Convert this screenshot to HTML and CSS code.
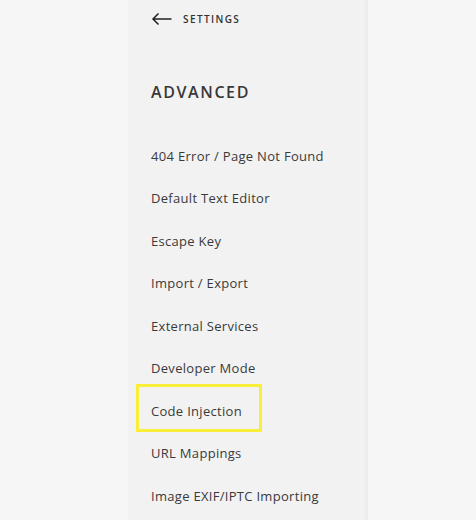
FILE: index.html
```html
<!DOCTYPE html>
<html>
<head>
<meta charset="utf-8">
<link rel="stylesheet" href="styles.css">
</head>
<body>
<div class="panel">
  <div class="header">
    <svg class="back" width="21" height="14" viewBox="0 0 21 14"><path d="M20.5 7H2M7.5 1.5L2 7l5.5 5.5" fill="none" stroke="#222" stroke-width="1.5"/></svg>
    <span class="crumb">SETTINGS</span>
  </div>
  <h1 class="title">ADVANCED</h1>
  <ul class="menu">
    <li>404 Error / Page Not Found</li>
    <li>Default Text Editor</li>
    <li>Escape Key</li>
    <li>Import / Export</li>
    <li>External Services</li>
    <li>Developer Mode</li>
    <li class="hl">Code Injection</li>
    <li>URL Mappings</li>
    <li>Image EXIF/IPTC Importing</li>
  </ul>
</div>
</body>
</html>
```
FILE: styles.css
```css
html, body { margin: 0; padding: 0; }
body {
  background: #f6f6f6;
  font-family: "Open Sans", "Liberation Sans", sans-serif;
  color: #3a3a3a;
  width: 476px;
  height: 520px;
  overflow: hidden;
}
.panel {
  margin-left: 128px;
  width: 240px;
  height: 520px;
  background: #f2f2f2;
  box-shadow: inset -5px 0 5px -4px rgba(0,0,0,0.05);
  padding-left: 23px;
  box-sizing: border-box;
}
.header {
  height: 38px;
  display: flex;
  align-items: center;
}
.back { display: block; margin-right: 11px; }
.crumb {
  font-size: 10px;
  font-weight: 600;
  letter-spacing: 1.4px;
  color: #333;
}
.title {
  margin: 40px 0 0;
  font-size: 16px;
  line-height: 28px;
  font-weight: 600;
  letter-spacing: 1.6px;
  color: #383838;
}
.menu {
  list-style: none;
  margin: 28.75px 0 0;
  padding: 0;
}
.menu li {
  height: 42.5px;
  line-height: 42.5px;
  font-size: 13px;
  letter-spacing: 0.3px;
}
.menu li.hl { position: relative; }
.menu li.hl::before {
  content: "";
  position: absolute;
  left: -15px;
  top: -6px;
  width: 126px;
  height: 48px;
  border: 3px solid #f9ef3b;
  box-sizing: border-box;
}
```
